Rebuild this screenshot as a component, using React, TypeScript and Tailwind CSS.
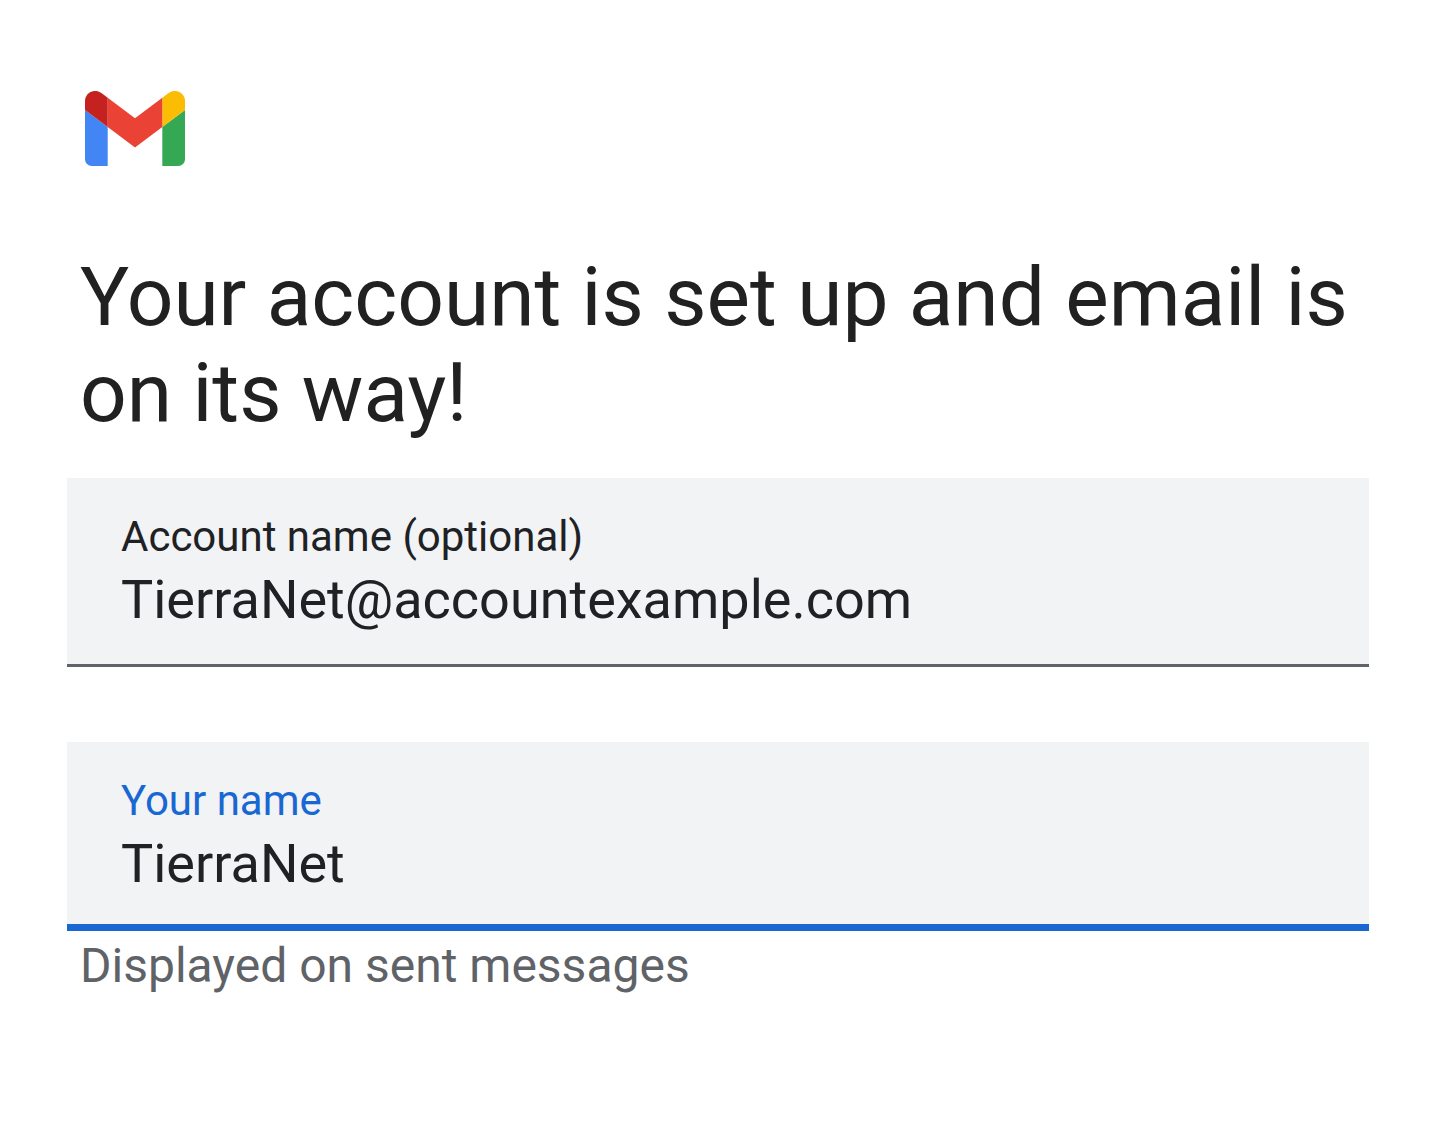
import { useId, useState } from "react";

function GmailLogo() {
  return (
    <svg viewBox="0 0 100 75" className="block h-[75px] w-[100px]" role="img" aria-label="Gmail">
      <path fill="#4285f4" d="M0 19 22.7 36V75H6.8A6.8 6.8 0 0 1 0 68.2Z" />
      <path fill="#34a853" d="M77.3 36 100 19v49.2a6.8 6.8 0 0 1-6.8 6.8H77.3Z" />
      <path fill="#fbbc04" d="M77.3 6.8V36L100 19v-8.9C100 1.7 90.4-3.1 83.6 2Z" />
      <path fill="#ea4335" d="M22.7 36V6.8L50 27.3 77.3 6.8V36L50 56.4Z" />
      <path fill="#c5221f" d="M0 10.1V19l22.7 17V6.8L16.4 2C9.6-3.1 0 1.7 0 10.1Z" />
    </svg>
  );
}

type FieldProps = { label: string; initial: string; active?: boolean };

function Field({ label, initial, active = false }: FieldProps) {
  const id = useId();
  const [value, setValue] = useState(initial);
  return (
    <div
      className={
        active
          ? "border-b-[7px] border-[#1967d2] bg-[#f1f3f4] px-[54px] pt-8 pb-6"
          : "border-b-[3px] border-[#5f6368] bg-[#f1f3f4] px-[54px] pt-8 pb-7"
      }
    >
      <label
        htmlFor={id}
        className={
          active
            ? "block text-[42px] leading-[54px] text-[#1967d2]"
            : "block text-[42px] leading-[54px] text-[#202124]"
        }
      >
        {label}
      </label>
      <input
        id={id}
        type="text"
        value={value}
        onChange={(e) => setValue(e.target.value)}
        className="block h-[72px] w-full bg-transparent text-[54px] leading-[72px] text-[#202124] outline-none"
      />
    </div>
  );
}

export default function App() {
  return (
    <main className="min-h-screen bg-white px-[67px] pt-[91px] pb-16 font-['Roboto',sans-serif]">
      <div className="pl-[18px]">
        <GmailLogo />
      </div>
      <h1 className="mt-[83px] pl-[13px] text-[82px] leading-[96px] text-[#212121]">
        Your account is set up and email is on its way!
      </h1>
      <form className="mt-[37px]" onSubmit={(e) => e.preventDefault()}>
        <Field label="Account name (optional)" initial="TierraNet@accountexample.com" />
        <div className="mt-[75px]">
          <Field label="Your name" initial="TierraNet" active />
        </div>
        <p className="mt-1 pl-[13px] text-[48px] leading-[62px] text-[#5f6368]">Displayed on sent messages</p>
      </form>
    </main>
  );
}
